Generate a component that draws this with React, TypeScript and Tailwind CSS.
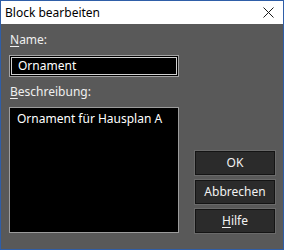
import React from 'react';

const font = { fontFamily: '"Segoe UI", "Noto Sans", "Open Sans", sans-serif' };

const Mnemonic: React.FC<{ first: string; rest: string }> = ({ first, rest }) => (
  <>
    <span className="underline underline-offset-2 decoration-1">{first}</span>
    {rest}
  </>
);

const DialogButton: React.FC<{ children: React.ReactNode }> = ({ children }) => (
  <button className="w-[80px] h-[24px] bg-[#2b2b2b] border border-[#141414] shadow-[0_0_0_1px_#6a6a6a] text-[12px] text-[#f2f2f2] leading-none flex items-center justify-center">
    {children}
  </button>
);

const App: React.FC = () => {
  return (
    <div className="w-[284px] h-[250px] border border-[#2f5ea8] bg-[#595959] flex flex-col text-[12px]" style={font}>
      {/* Titelleiste */}
      <div className="h-[23px] bg-white flex items-center justify-between pl-[4px] pr-[9px] shrink-0">
        <span className="text-[12px] text-black">Block bearbeiten</span>
        <svg width="11" height="11" viewBox="0 0 11 11" className="text-[#1a1a1a]">
          <path d="M0.5 0.5 L10.5 10.5 M10.5 0.5 L0.5 10.5" stroke="currentColor" strokeWidth="1" />
        </svg>
      </div>

      <div className="flex flex-1 pl-[8px] pr-[7px] pt-[8px] pb-[15px] gap-[16px]">
        <div className="flex flex-col w-[170px]">
          <label className="leading-[16px] text-[#f0f0f0] pl-[1px]">
            <Mnemonic first="N" rest="ame:" />
          </label>
          <div className="mt-[7px] h-[22px] border border-[#a3a3a3] bg-black p-[1px]">
            <div className="h-full border border-[#d0d0d0] flex items-center pl-[6px] text-white leading-none">
              Ornament
            </div>
          </div>
          <label className="mt-[7px] leading-[16px] text-[#f0f0f0] pl-[1px]">
            <Mnemonic first="B" rest="eschreibung:" />
          </label>
          <div className="mt-[7px] h-[126px] border border-[#9c9c9c] bg-black pl-[7px] pt-[3px] text-white leading-[16px]">
            Ornament für Hausplan A
          </div>
        </div>

        <div className="flex flex-col justify-end gap-[5px] pb-[1px]">
          <DialogButton>OK</DialogButton>
          <DialogButton>Abbrechen</DialogButton>
          <DialogButton>
            <Mnemonic first="H" rest="ilfe" />
          </DialogButton>
        </div>
      </div>
    </div>
  );
};

export default App;
